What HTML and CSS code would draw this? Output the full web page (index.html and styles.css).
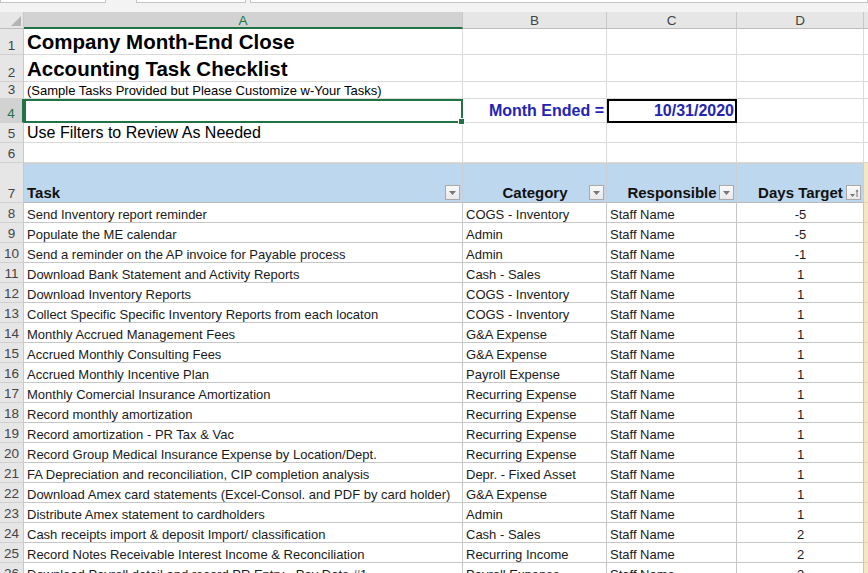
FILE: index.html
```html
<!DOCTYPE html>
<html>
<head>
<meta charset="utf-8">
<link rel="stylesheet" href="styles.css">
</head>
<body>
<div class="topbar">
  <div class="tb tb1"></div><div class="tb tb2"></div><div class="tb tb3"></div>
</div>
<div class="sheet">
  <!-- column headers -->
  <div class="corner"><svg width="10" height="10" viewBox="0 0 10 10"><polygon points="10,0 10,10 0,10" fill="#b4b4b4"/></svg></div>
  <div class="ch sel">A</div>
  <div class="ch">B</div>
  <div class="ch">C</div>
  <div class="ch">D</div>
  <div class="ch last"></div>

  <!-- row 1 -->
  <div class="rh">1</div>
  <div class="c title">Company Month-End Close</div>
  <div class="c"></div><div class="c"></div><div class="c"></div><div class="c e"></div>

  <!-- row 2 -->
  <div class="rh">2</div>
  <div class="c title">Accounting Task Checklist</div>
  <div class="c"></div><div class="c"></div><div class="c"></div><div class="c e"></div>

  <!-- row 3 -->
  <div class="rh">3</div>
  <div class="c sub">(Sample Tasks Provided but Please Customize w-Your Tasks)</div>
  <div class="c"></div><div class="c"></div><div class="c"></div><div class="c e"></div>

  <!-- row 4 -->
  <div class="rh sel">4</div>
  <div class="c active"><span class="handle"></span></div>
  <div class="c month">Month Ended =</div>
  <div class="c date">10/31/2020</div>
  <div class="c"></div><div class="c e"></div>

  <!-- row 5 -->
  <div class="rh">5</div>
  <div class="c note">Use Filters to Review As Needed</div>
  <div class="c"></div><div class="c"></div><div class="c"></div><div class="c e"></div>

  <!-- row 6 -->
  <div class="rh">6</div>
  <div class="c"></div><div class="c"></div><div class="c"></div><div class="c"></div><div class="c e"></div>

  <!-- row 7 header -->
  <div class="rh">7</div>
  <div class="c th">Task<span class="fb"><svg width="7" height="4" viewBox="0 0 7 4"><polygon points="0,0 7,0 3.5,4" fill="#777"/></svg></span></div>
  <div class="c th mid">Category<span class="fb"><svg width="7" height="4" viewBox="0 0 7 4"><polygon points="0,0 7,0 3.5,4" fill="#777"/></svg></span></div>
  <div class="c th mid">Responsible<span class="fb"><svg width="7" height="4" viewBox="0 0 7 4"><polygon points="0,0 7,0 3.5,4" fill="#777"/></svg></span></div>
  <div class="c th mid">Days Target<span class="fb"><svg width="10" height="10" viewBox="0 0 10 10"><polygon points="1,6 6,6 3.5,9" fill="#777"/><line x1="8" y1="2" x2="8" y2="9" stroke="#777" stroke-width="1"/><polygon points="6.5,3.5 9.5,3.5 8,1.5" fill="#777"/></svg></span></div>
  <div class="c e tan"></div>

  <div class="rh">8</div><div class="c d">Send Inventory report reminder</div><div class="c d">COGS - Inventory</div><div class="c d">Staff Name</div><div class="c d n">-5</div><div class="c e tan"></div>
  <div class="rh">9</div><div class="c d">Populate the ME calendar</div><div class="c d">Admin</div><div class="c d">Staff Name</div><div class="c d n">-5</div><div class="c e tan"></div>
  <div class="rh">10</div><div class="c d">Send a reminder on the AP invoice for Payable process</div><div class="c d">Admin</div><div class="c d">Staff Name</div><div class="c d n">-1</div><div class="c e tan"></div>
  <div class="rh">11</div><div class="c d">Download Bank Statement and Activity Reports</div><div class="c d">Cash - Sales</div><div class="c d">Staff Name</div><div class="c d n">1</div><div class="c e tan"></div>
  <div class="rh">12</div><div class="c d">Download Inventory Reports</div><div class="c d">COGS - Inventory</div><div class="c d">Staff Name</div><div class="c d n">1</div><div class="c e tan"></div>
  <div class="rh">13</div><div class="c d">Collect Specific Specific Inventory Reports from each locaton</div><div class="c d">COGS - Inventory</div><div class="c d">Staff Name</div><div class="c d n">1</div><div class="c e tan"></div>
  <div class="rh">14</div><div class="c d">Monthly Accrued Management Fees</div><div class="c d">G&amp;A Expense</div><div class="c d">Staff Name</div><div class="c d n">1</div><div class="c e tan"></div>
  <div class="rh">15</div><div class="c d">Accrued Monthly Consulting Fees</div><div class="c d">G&amp;A Expense</div><div class="c d">Staff Name</div><div class="c d n">1</div><div class="c e tan"></div>
  <div class="rh">16</div><div class="c d">Accrued Monthly Incentive Plan</div><div class="c d">Payroll Expense</div><div class="c d">Staff Name</div><div class="c d n">1</div><div class="c e tan"></div>
  <div class="rh">17</div><div class="c d">Monthly Comercial Insurance Amortization</div><div class="c d">Recurring Expense</div><div class="c d">Staff Name</div><div class="c d n">1</div><div class="c e tan"></div>
  <div class="rh">18</div><div class="c d">Record monthly amortization</div><div class="c d">Recurring Expense</div><div class="c d">Staff Name</div><div class="c d n">1</div><div class="c e tan"></div>
  <div class="rh">19</div><div class="c d">Record amortization - PR Tax &amp; Vac</div><div class="c d">Recurring Expense</div><div class="c d">Staff Name</div><div class="c d n">1</div><div class="c e tan"></div>
  <div class="rh">20</div><div class="c d">Record Group Medical Insurance Expense by Location/Dept.</div><div class="c d">Recurring Expense</div><div class="c d">Staff Name</div><div class="c d n">1</div><div class="c e tan"></div>
  <div class="rh">21</div><div class="c d">FA Depreciation and reconciliation, CIP completion analysis</div><div class="c d">Depr. - Fixed Asset</div><div class="c d">Staff Name</div><div class="c d n">1</div><div class="c e tan"></div>
  <div class="rh">22</div><div class="c d">Download Amex card statements (Excel-Consol. and PDF by card holder)</div><div class="c d">G&amp;A Expense</div><div class="c d">Staff Name</div><div class="c d n">1</div><div class="c e tan"></div>
  <div class="rh">23</div><div class="c d">Distribute Amex statement to cardholders</div><div class="c d">Admin</div><div class="c d">Staff Name</div><div class="c d n">1</div><div class="c e tan"></div>
  <div class="rh">24</div><div class="c d">Cash receipts import &amp; deposit Import/ classification</div><div class="c d">Cash - Sales</div><div class="c d">Staff Name</div><div class="c d n">2</div><div class="c e tan"></div>
  <div class="rh">25</div><div class="c d">Record Notes Receivable Interest Income &amp; Reconciliation</div><div class="c d">Recurring Income</div><div class="c d">Staff Name</div><div class="c d n">2</div><div class="c e tan"></div>
  <div class="rh">26</div><div class="c d">Download Payroll detail and record PR Entry - Pay Date #1</div><div class="c d">Payroll Expense</div><div class="c d">Staff Name</div><div class="c d n">2</div><div class="c e tan"></div>
</div>
</body>
</html>
```

FILE: styles.css
```css
html, body {
  margin: 0;
  padding: 0;
  background: #ffffff;
  overflow: hidden;
  width: 868px;
  height: 573px;
}
body {
  font-family: "Liberation Sans", Arial, sans-serif;
  color: #1a1a1a;
}
.topbar {
  height: 12px;
  background: #f3f3f3;
  display: flex;
  gap: 0;
  align-items: flex-start;
}
.tb {
  height: 2px;
  background: #ffffff;
  border: 1px solid #c6c6c6;
  border-top: none;
}
.tb1 { width: 104px; margin-left: 0; }
.tb2 { width: 108px; margin-left: 30px; }
.tb3 { flex: 1; margin-left: 4px; }

.sheet {
  display: grid;
  grid-template-columns: 24px 439px 144px 130px 127px 4px;
  grid-template-rows: 17px 26px 27px 17px 24px 20px 20px 40px;
  grid-auto-rows: 20px;
}
.sheet > div {
  box-sizing: border-box;
  min-width: 0;
}
.corner {
  background: #e6e6e6;
  border-right: 1px solid #c8c8c8;
  border-bottom: 1px solid #bdbdbd;
  display: flex;
  align-items: flex-end;
  justify-content: flex-end;
  padding: 0 2px 2px 0;
}
.ch {
  background: #e6e6e6;
  border-right: 1px solid #c8c8c8;
  border-bottom: 1px solid #bdbdbd;
  font-size: 13.5px;
  color: #444;
  display: flex;
  align-items: center;
  justify-content: center;
  padding-top: 1px;
}
.ch.sel {
  background: #d2d2d2;
  color: #217346;
  border-bottom: 2px solid #217346;
}
.ch.last {
  border-right: none;
}
.rh {
  background: #e6e6e6;
  border-right: 1px solid #c8c8c8;
  border-bottom: 1px solid #d0d0d0;
  font-size: 13.5px;
  color: #444;
  display: flex;
  align-items: flex-end;
  justify-content: center;
  padding-bottom: 1px;
}
.rh.sel {
  background: #d2d2d2;
  color: #217346;
  border-right: 2px solid #217346;
}
.c {
  border-right: 1px solid #dadada;
  border-bottom: 1px solid #dadada;
  display: flex;
  align-items: flex-end;
  padding: 0 2px 1px 3px;
  white-space: nowrap;
  overflow: hidden;
  position: relative;
  font-size: 13px;
}
.c.e {
  border-right: none;
}
.c.tan {
  background: #f6e7c3;
  border-bottom-color: #e8d6ad;
}
.title {
  font-size: 20.5px;
  font-weight: bold;
  color: #000;
  padding-bottom: 0;
}
.sub {
  font-size: 13px;
  color: #000;
  padding-bottom: 0;
}
.note {
  font-size: 16px;
  color: #000;
  padding-bottom: 0;
}
.active {
  border: 2px solid #217346;
  overflow: visible;
}
.handle {
  position: absolute;
  right: -4px;
  bottom: -4px;
  width: 5px;
  height: 5px;
  background: #217346;
  border: 1px solid #ffffff;
  z-index: 2;
}
.month {
  justify-content: flex-end;
  font-weight: bold;
  font-size: 16px;
  color: #2424b4;
  padding-right: 2px;
  padding-bottom: 2px;
}
.date {
  justify-content: flex-end;
  font-weight: bold;
  font-size: 16px;
  color: #2424b4;
  border: 2px solid #000;
  padding-right: 1px;
  padding-bottom: 1px;
}
.th {
  background: #bdd7ee;
  border-right: 1px solid #c9cfd6;
  border-bottom: 1px solid #b9b9b9;
  font-weight: bold;
  font-size: 15px;
  color: #111;
  padding-bottom: 1px;
  border-top: 1px solid #cfcfcf;
}
.th.mid {
  justify-content: center;
}
.fb {
  position: absolute;
  right: 2px;
  bottom: 2px;
  width: 15px;
  height: 15px;
  box-sizing: border-box;
  background: linear-gradient(#fafafa, #e9e9e9);
  border: 1px solid #a9a9a9;
  display: flex;
  align-items: center;
  justify-content: center;
}
.d {
  border-right: 1px solid #c6c6c6;
  border-bottom: 1px solid #c6c6c6;
  color: #1a1a1a;
  padding-bottom: 0;
}
.n {
  justify-content: center;
}
```
